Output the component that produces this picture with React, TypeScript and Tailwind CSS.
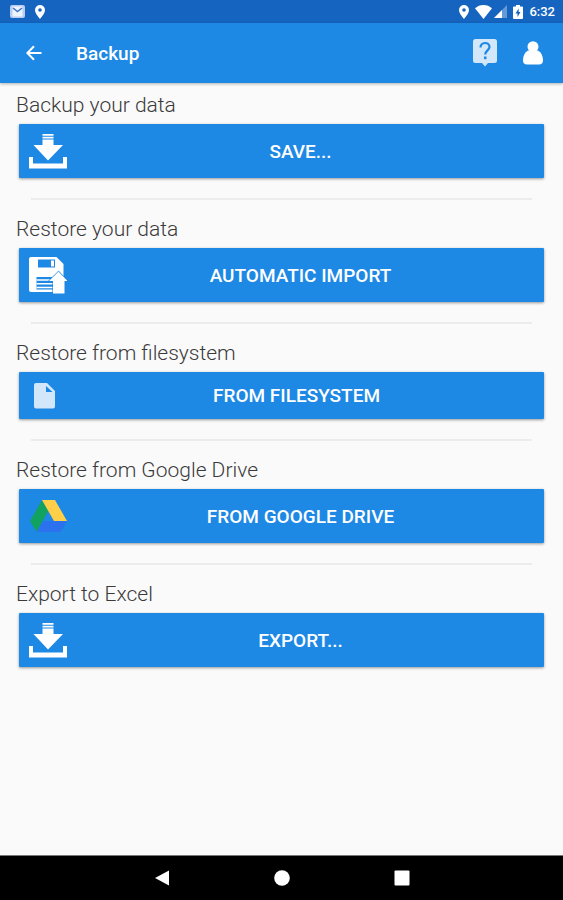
import type { ReactNode } from "react";

const PinIcon = () => (
  <svg viewBox="0 0 10 14" className="h-3.5 w-2.5" fill="#fff">
    <path
      fillRule="evenodd"
      d="M5 0a5 5 0 0 0-5 5c0 3.6 5 9 5 9s5-5.400 5-9a5 5 0 0 0-5-5zm0 3.200a1.800 1.800 0 1 1 0 3.600 1.800 1.800 0 0 1 0-3.600z"
    />
  </svg>
);

const MailIcon = () => (
  <svg viewBox="0 0 15 13" className="h-[13px] w-[15px]">
    <rect width="15" height="13" rx="2" fill="#b9cdf0" />
    <rect x="2.500" y="1.500" width="10" height="10" fill="#eef4fd" />
    <path d="M3 3l4.500 3.500L12 3" fill="none" stroke="#3d74c8" strokeWidth="1.500" />
  </svg>
);

const WifiIcon = () => (
  <svg viewBox="0 0 17 14" className="h-3.5 w-[17px]" fill="#fff">
    <path d="M8.500 14L0 3.300C2.300 1.200 5.300 0 8.500 0S14.700 1.200 17 3.300z" />
  </svg>
);

const SignalIcon = () => (
  <svg viewBox="0 0 13 13" className="h-[13px] w-[13px]" fill="#fff">
    <path d="M13 0v13H0z" opacity="0.350" />
    <path d="M8 5v8H0z" />
  </svg>
);

const BatteryIcon = () => (
  <svg viewBox="0 0 10 14" className="h-3.5 w-2.5">
    <path
      d="M3 0h4v1.500h2a1 1 0 0 1 1 1V13a1 1 0 0 1-1 1H1a1 1 0 0 1-1-1V2.500a1 1 0 0 1 1-1h2z"
      fill="#fff"
    />
    <path d="M5.700 3.500L2.500 8.500h2v3.500l3-5h-1.800z" fill="#1565c0" />
  </svg>
);

const BackIcon = () => (
  <svg viewBox="0 0 16 16" className="size-4" fill="none" stroke="#fff" strokeWidth="2">
    <path d="M15.500 8H1.500M8 1.200L1.300 8L8 14.800" />
  </svg>
);

const HelpIcon = () => (
  <svg viewBox="0 0 24 28" className="h-7 w-6">
    <path
      d="M2.500 0h19A2.500 2.500 0 0 1 24 2.500v19a2.500 2.500 0 0 1-2.500 2.500H15l-3 3.500L9 24H2.500A2.500 2.500 0 0 1 0 21.500v-19A2.500 2.500 0 0 1 2.500 0z"
      fill="#d2e7fa"
    />
    <path
      d="M7.500 8.500c0-2.700 1.900-4.500 4.500-4.500s4.500 1.700 4.500 4.100c0 3-4.300 3.700-4.300 7.400"
      fill="none"
      stroke="#1e88e5"
      strokeWidth="2.200"
    />
    <rect x="11" y="17.500" width="2.500" height="2.700" fill="#1e88e5" />
  </svg>
);

const UserIcon = () => (
  <svg viewBox="0 0 20 24" className="h-6 w-5" fill="#fff">
    <circle cx="10" cy="5.700" r="5.500" />
    <path d="M5 9.500C1.700 11.500 0 15 0 19.500 0 22 1.500 23.500 4 23.500h12c2.500 0 4-1.500 4-4 0-4.500-1.700-8-5-10z" />
  </svg>
);

const DownloadIcon = () => (
  <svg viewBox="0 0 38 36" className="h-9 w-[38px]" fill="#fff">
    <path d="M13.500 1h11v1.800h-11zM13.500 3.800h11v1.800h-11zM13.500 6.500h11V12H34L19 27.500 4.500 12h9z" />
    <path d="M0 24h4v6.500h30V24h4v11.500H0z" />
  </svg>
);

const FloppyIcon = () => (
  <svg viewBox="0 0 38 38" className="size-[38px]">
    <path d="M2 1h25.500l7 7v28H2a2 2 0 0 1-2-2V3a2 2 0 0 1 2-2z" fill="#fff" />
    <path d="M9 3.500h17v8H9zM7.500 21H28v12.500H7.500z" fill="#1e88e5" />
    <path d="M22 4.500h3v6h-3zM7.500 23.300h20v1.500h-20zM7.500 27h20v1.500h-20zM7.500 30.700h20v1.500h-20z" fill="#fff" />
    <path
      d="M29.500 15.500l9 9.500H35.500V37.500H24V25h-4z"
      fill="#fff"
      stroke="#1e88e5"
      strokeWidth="1.200"
      paintOrder="stroke"
    />
  </svg>
);

const FileIcon = () => (
  <svg viewBox="0 0 30 28" className="h-7 w-[30px]" fill="#d2e7fa">
    <path
      fillRule="evenodd"
      d="M7 1h11l8 8v15.500a2 2 0 0 1-2 2H7a2 2 0 0 1-2-2V3a2 2 0 0 1 2-2zm10 3v6h6.500z"
    />
  </svg>
);

const DriveIcon = () => (
  <svg viewBox="0 0 38 34" className="h-[34px] w-[38px]">
    <path d="M13 1l6.300 10.700L7.500 33 1 22z" fill="#11a260" />
    <path d="M13 1h13l12 21H25z" fill="#ffcf48" />
    <path d="M14 22h24l-6.500 11h-24z" fill="#2c71ee" />
  </svg>
);

interface Section {
  title: string;
  action: string;
  icon: ReactNode;
  compact?: boolean;
}

const sections: Section[] = [
  { title: "Backup your data", action: "SAVE...", icon: <DownloadIcon /> },
  { title: "Restore your data", action: "AUTOMATIC IMPORT", icon: <FloppyIcon /> },
  {
    title: "Restore from filesystem",
    action: "FROM FILESYSTEM",
    icon: <FileIcon />,
    compact: true,
  },
  { title: "Restore from Google Drive", action: "FROM GOOGLE DRIVE", icon: <DriveIcon /> },
  { title: "Export to Excel", action: "EXPORT...", icon: <DownloadIcon /> },
];

const StatusBar = () => (
  <div className="flex h-[23px] items-center justify-between bg-[#1565c0] pr-2 pl-2.5 text-white">
    <div className="flex items-center gap-2.5">
      <MailIcon />
      <PinIcon />
    </div>
    <div className="flex items-center gap-1.5">
      <PinIcon />
      <div className="flex items-center gap-0.5">
        <WifiIcon />
        <SignalIcon />
      </div>
      <BatteryIcon />
      <span className="text-[13px] font-medium">6:32</span>
    </div>
  </div>
);

const App = () => {
  return (
    <div className="flex min-h-screen flex-col bg-[#fafafa] font-[Roboto,sans-serif]">
      <StatusBar />

      {/* Toolbar */}
      <header className="flex h-[60px] items-center bg-[#1e88e5] pr-5 pl-[26px] text-white shadow-[0_1px_3px_rgba(0,0,0,0.3)]">
        <button aria-label="Back">
          <BackIcon />
        </button>
        <h1 className="flex-1 pt-0.5 pl-[34px] text-[19px] font-medium">Backup</h1>
        <div className="flex items-center gap-[26px]">
          <button aria-label="Help">
            <HelpIcon />
          </button>
          <button aria-label="Account">
            <UserIcon />
          </button>
        </div>
      </header>

      <main className="flex-1 px-4 pt-2.5">
        {sections.map((section, index) => (
          <section key={section.title}>
            <h2 className="text-[21px] leading-6 font-light text-[#3a3a3a]">{section.title}</h2>
            <div className="px-[3px] pt-[7px]">
              <button
                className={`flex w-full items-center rounded-[1px] bg-[#1e88e5] px-2.5 text-[19px] font-medium text-white shadow-[0_1px_3px_rgba(0,0,0,0.4)] ${
                  section.compact ? "h-[47px]" : "h-[54px]"
                }`}
              >
                {section.icon}
                <span className="flex-1 pt-0.5 text-center">{section.action}</span>
              </button>
            </div>
            {index < sections.length - 1 && (
              <hr className="mx-[15px] mt-5 mb-[17px] border-t-2 border-[#ececec]" />
            )}
          </section>
        ))}
      </main>

      {/* System navigation */}
      <nav className="flex h-[45px] items-center justify-center gap-[104px] border-t border-[#777] bg-black">
        <button aria-label="Navigate back">
          <svg viewBox="0 0 16 16" className="size-4" fill="#fff">
            <path d="M15 0.500v15L1 8z" />
          </svg>
        </button>
        <button aria-label="Home">
          <svg viewBox="0 0 16 16" className="size-4" fill="#fff">
            <circle cx="8" cy="8" r="7.800" />
          </svg>
        </button>
        <button aria-label="Recent apps">
          <svg viewBox="0 0 16 16" className="size-4" fill="#fff">
            <rect x="0.500" y="0.500" width="15" height="15" rx="1" />
          </svg>
        </button>
      </nav>
    </div>
  );
};

export default App;
